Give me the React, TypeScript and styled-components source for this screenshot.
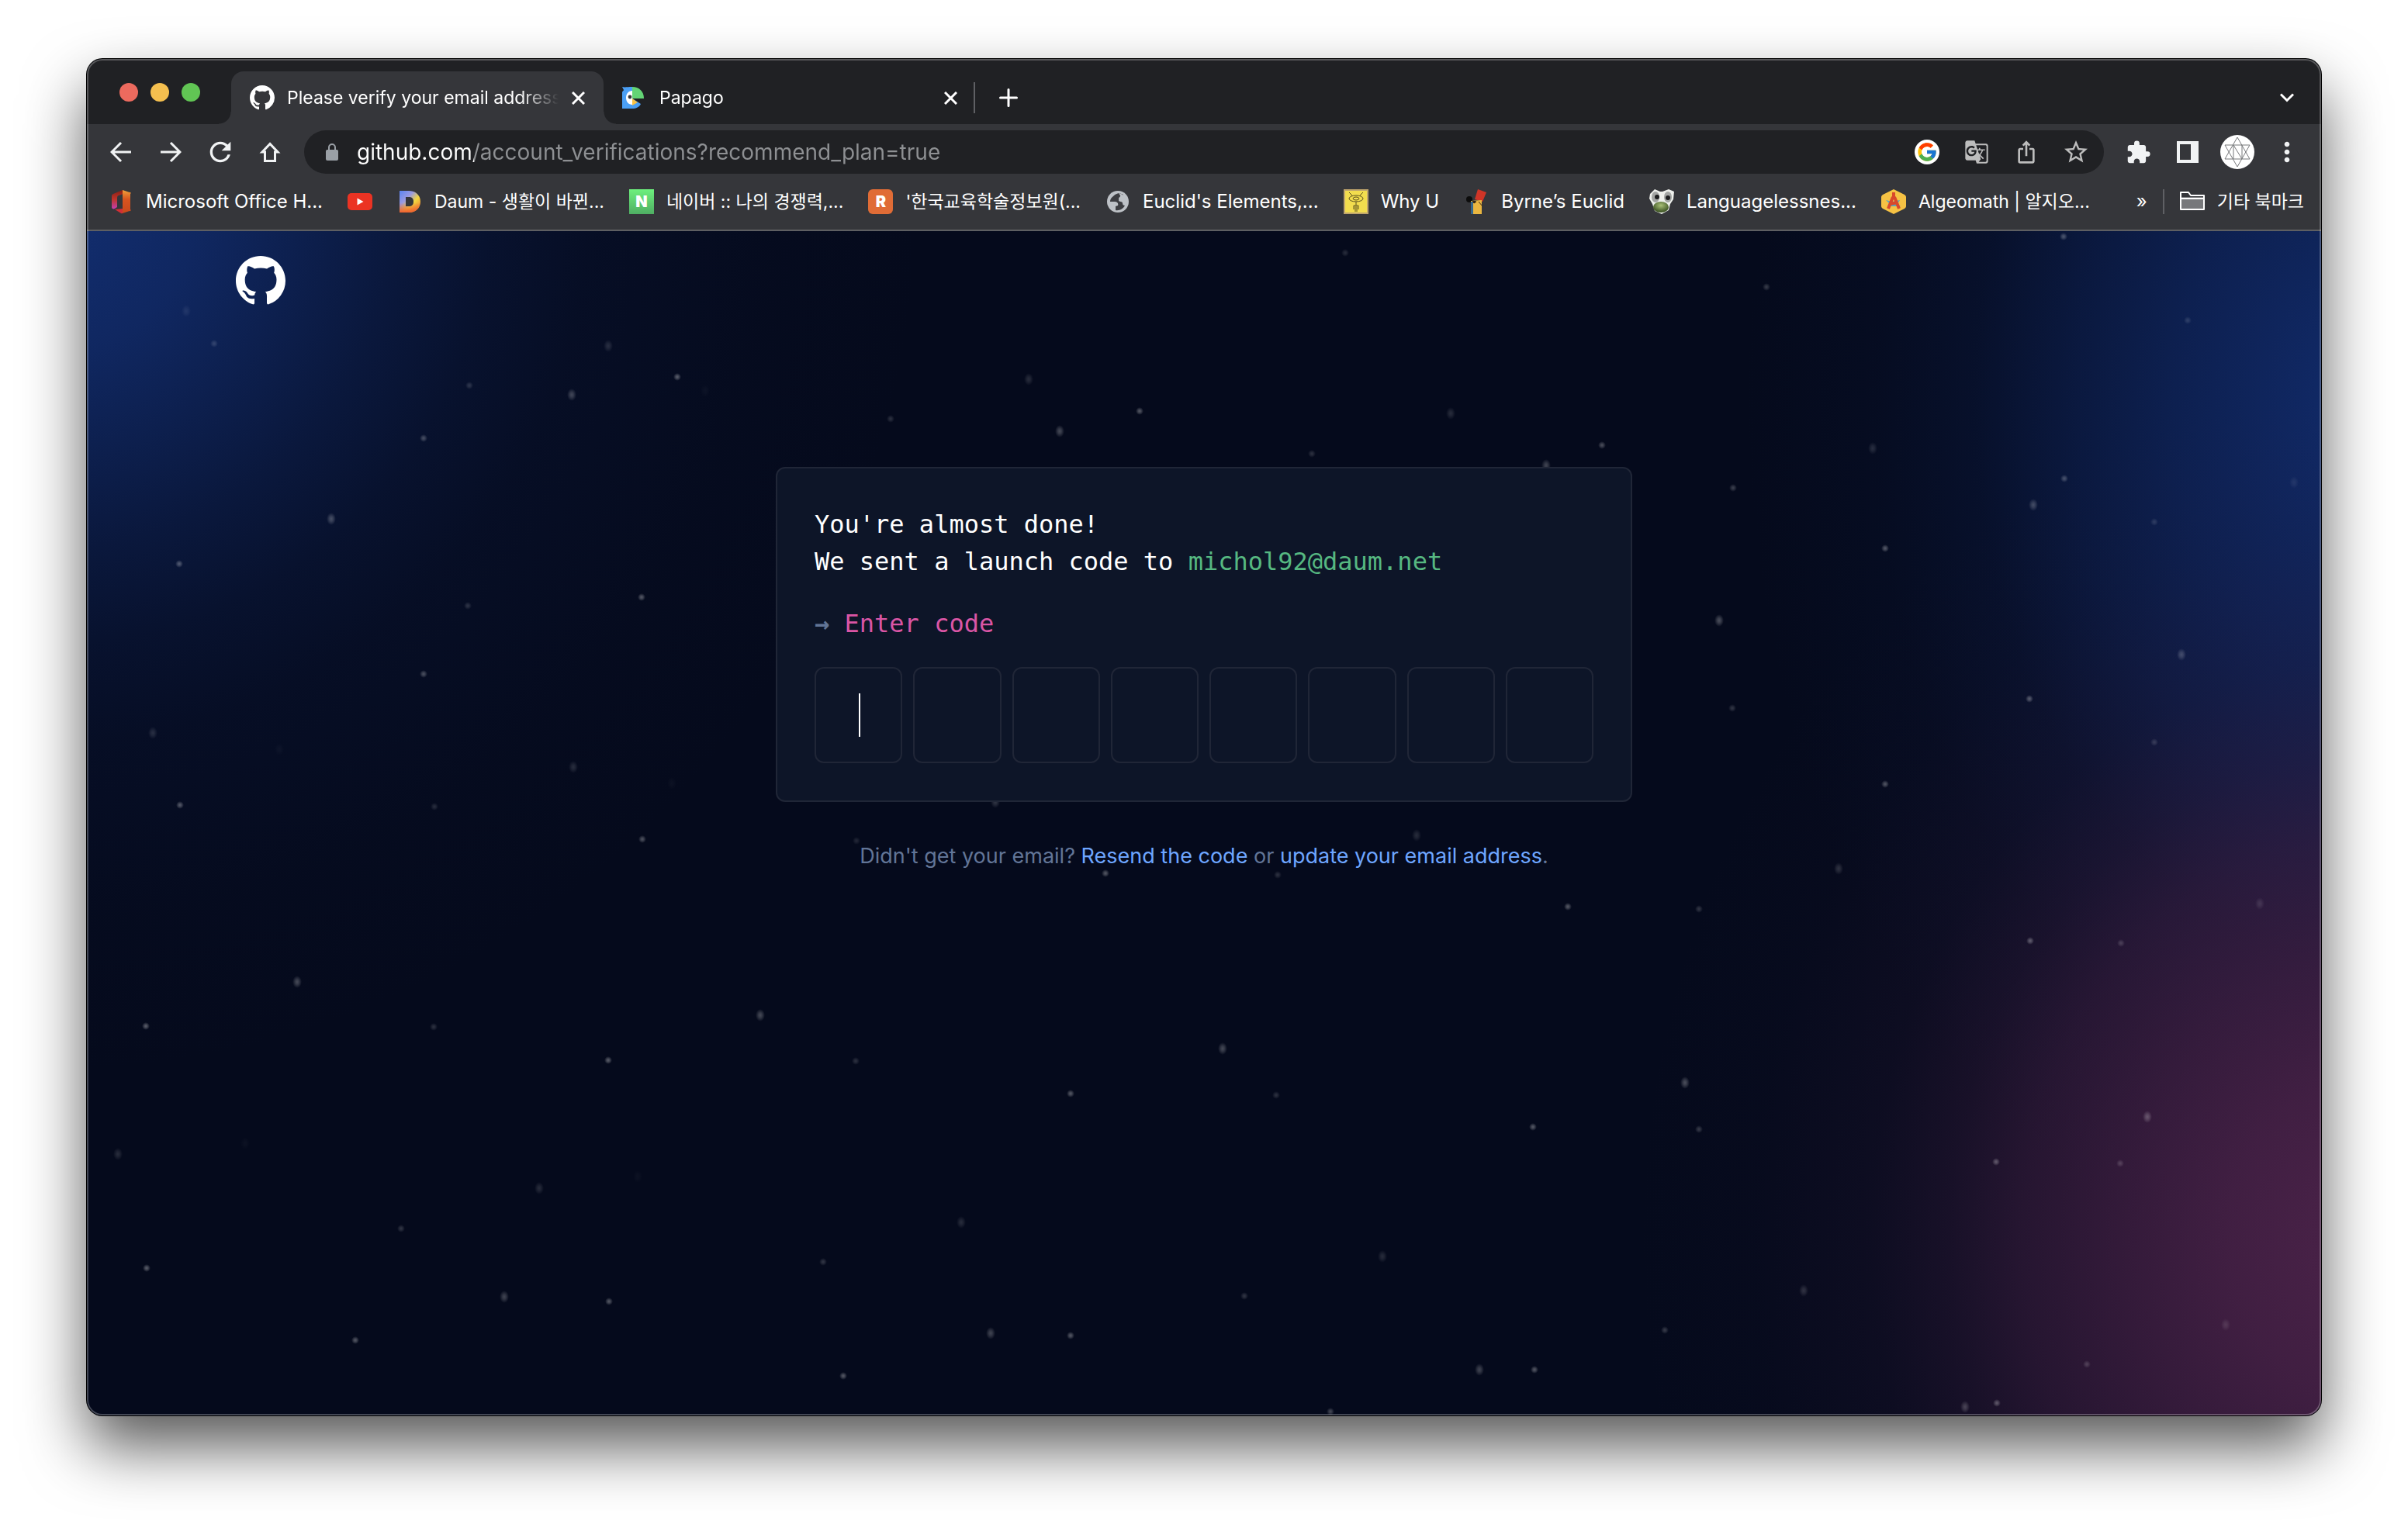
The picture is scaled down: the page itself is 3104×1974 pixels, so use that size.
import React from "react";
import styled, { createGlobalStyle } from "styled-components";
import {
  MdRefresh,
  MdGTranslate,
  MdIosShare,
  MdStarBorder,
  MdExtension,
  MdMoreVert,
} from "react-icons/md";
import { FcGoogle } from "react-icons/fc";

const ui = `Inter, "Noto Sans CJK KR", sans-serif`;
const mono = `"DejaVu Sans Mono", "Liberation Mono", monospace`;

const GlobalStyle = createGlobalStyle`
  *, *::before, *::after { box-sizing: border-box; }
  body { margin: 0; background: #fff; font-family: ${ui}; }
  button, input { font: inherit; color: inherit; }
  button { border: 0; padding: 0; background: none; }
  svg { display: block; }
`;

const Desktop = styled.div`
  min-height: 100vh;
  padding: 76px 112px 149px;
  display: flex;
  overflow: hidden;
`;

const BrowserWindow = styled.div`
  position: relative;
  flex: 1;
  min-width: 0;
  display: flex;
  flex-direction: column;
  overflow: hidden;
  border-radius: 20px;
  background: #050a1c;
  box-shadow: 0 0 0 1px #000, 0 40px 80px rgba(0, 0, 0, 0.66);

  &::after {
    content: "";
    position: absolute;
    inset: 0;
    border: 2px solid rgba(255, 255, 255, 0.25);
    border-radius: 20px;
    pointer-events: none;
    z-index: 3;
  }
`;

/* Tab strip */

const TabStrip = styled.div`
  height: 84px;
  display: flex;
  align-items: flex-end;
  padding: 0 12px 0 42px;
  background: #202124;
`;

const Lights = styled.div`
  display: flex;
  align-items: center;
  align-self: stretch;
  gap: 16px;
  margin-right: 40px;
  padding-top: 2px;
`;

const Light = styled.button<{ $color: string }>`
  width: 24px;
  height: 24px;
  border-radius: 50%;
  background: ${(p) => p.$color};
`;

const Tabs = styled.div`
  display: flex;
`;

const Tab = styled.div<{ $active?: boolean }>`
  position: relative;
  width: 480px;
  height: 68px;
  display: flex;
  align-items: center;
  padding: 0 17px 0 24px;
  border-radius: 16px 16px 0 0;
  background: ${(p) => (p.$active ? "#35363a" : "transparent")};

  &::before,
  &::after {
    content: "";
    display: ${(p) => (p.$active ? "block" : "none")};
    position: absolute;
    bottom: 0;
    width: 16px;
    height: 16px;
  }
  &::before {
    right: 100%;
    background: radial-gradient(circle at 0 0, transparent 15px, #35363a 16px);
  }
  &::after {
    left: 100%;
    background: radial-gradient(circle at 100% 0, transparent 15px, #35363a 16px);
  }
`;

const TabTitle = styled.button`
  flex: 1;
  min-width: 0;
  height: 100%;
  display: flex;
  align-items: center;
  gap: 16px;
  color: #fff;
  font-size: 23px;
  line-height: 32px;
  text-align: left;
`;

const TabText = styled.span`
  flex: 1;
  min-width: 0;
  overflow: hidden;
  white-space: nowrap;
  mask-image: linear-gradient(to right, #000 300px, transparent 350px);
`;

const CloseButton = styled.button`
  width: 32px;
  height: 32px;
  display: grid;
  place-items: center;
  color: #fff;
`;

const TabDivider = styled.span`
  width: 2px;
  height: 40px;
  margin: 0 11px 14px -3px;
  background: #5f6064;
`;

const IconButton = styled.button<{ $tone?: string }>`
  flex: none;
  width: 64px;
  height: 56px;
  display: grid;
  place-items: center;
  color: ${(p) => p.$tone ?? "#f1f3f4"};
`;

const StripButton = styled(IconButton)`
  height: 68px;
`;

const Spacer = styled.div`
  flex: 1;
`;

/* Toolbar */

const Toolbar = styled.div`
  height: 72px;
  display: flex;
  align-items: center;
  padding: 0 12px;
  background: #35363a;
`;

const Omnibox = styled.form`
  flex: 1;
  min-width: 0;
  height: 56px;
  display: flex;
  align-items: center;
  margin: 0 12px;
  padding: 0 4px;
  border-radius: 28px;
  background: #202124;
`;

const AddressInput = styled.input`
  flex: 1;
  min-width: 0;
  height: 56px;
  padding: 0;
  border: 0;
  outline: 0;
  font-size: 28px;
  color: #8e9093;
  background: linear-gradient(to right, #fff 151px, #8e9093 151px);
  background-clip: text;
  -webkit-text-fill-color: transparent;
`;

const GoogleBadge = styled.span`
  width: 32px;
  height: 32px;
  display: grid;
  place-items: center;
  border-radius: 50%;
  background: #fff;
`;

const Bookmarks = styled.nav`
  height: 66px;
  display: flex;
  align-items: center;
  gap: 32px;
  padding: 0 22px 8px 28px;
  border-bottom: 2px solid #5e5f62;
  background: #35363a;
`;

const Bookmark = styled.a`
  flex: none;
  display: flex;
  align-items: center;
  gap: 16px;
  color: #fff;
  font-size: 24px;
  line-height: 32px;
  white-space: nowrap;
  text-decoration: none;

  &:lang(ko) {
    font-size: 23px;
  }
`;

const BookmarksEnd = styled.div`
  display: flex;
  align-items: center;
  gap: 20px;
  margin-left: auto;
`;

const MoreBookmarks = styled.button`
  color: #fff;
  font-size: 24px;
  line-height: 32px;
`;

const Rule = styled.span`
  width: 2px;
  height: 32px;
  background: #5f6064;
`;

const LetterIcon = styled.span<{ $background: string; $radius: number }>`
  width: 32px;
  height: 32px;
  display: grid;
  place-items: center;
  border-radius: ${(p) => p.$radius}px;
  background: ${(p) => p.$background};
  color: #fff;
  font-size: 20px;
  font-weight: 900;
  line-height: 32px;
`;

/* Page */

const Page = styled.main`
  position: relative;
  isolation: isolate;
  flex: 1;
  display: flex;
  flex-direction: column;
  background:
    radial-gradient(
      ellipse 940px 1090px at 102% 85%,
      rgba(74, 34, 72, 0.95) 8%,
      rgba(74, 34, 72, 0.86) 19%,
      rgba(74, 34, 72, 0.68) 33%,
      rgba(74, 34, 72, 0.48) 47%,
      rgba(74, 34, 72, 0.28) 57%,
      rgba(74, 34, 72, 0.12) 68%,
      rgba(74, 34, 72, 0.03) 84%,
      transparent 100%
    ),
    radial-gradient(
      ellipse 800px 1150px at 102% 14%,
      rgba(17, 42, 104, 0.95) 7%,
      rgba(17, 42, 104, 0.68) 31%,
      rgba(17, 42, 104, 0.46) 47%,
      rgba(17, 42, 104, 0.2) 63%,
      rgba(17, 42, 104, 0.07) 79%,
      transparent 100%
    ),
    radial-gradient(
      ellipse 1140px 1140px at -2% -3%,
      rgba(18, 45, 110, 1) 4%,
      rgba(18, 45, 110, 0.84) 18%,
      rgba(18, 45, 110, 0.6) 30%,
      rgba(18, 45, 110, 0.4) 40%,
      rgba(18, 45, 110, 0.22) 51%,
      rgba(18, 45, 110, 0.11) 62%,
      rgba(18, 45, 110, 0.03) 82%,
      transparent 100%
    ),
    #050a1c;
`;

const Sky = styled.svg`
  position: absolute;
  inset: 0;
  width: 100%;
  height: 100%;
  z-index: -1;
`;

const PageHeader = styled.header`
  display: flex;
  padding: 32px 192px;
`;

const LogoLink = styled.a`
  color: #fff;
`;

const Content = styled.section`
  display: flex;
  flex-direction: column;
  align-items: center;
  padding: 176px 32px 64px;
`;

const Card = styled.form`
  width: 100%;
  max-width: 1104px;
  padding: 48px;
  border: 2px solid #202637;
  border-radius: 12px;
  background: #0d1528;
  font-family: ${mono};
  font-size: 32px;
  line-height: 48px;
  color: #fff;
`;

const Message = styled.p`
  margin: 0 0 32px;
`;

const Email = styled.span`
  color: #56b881;
`;

const Prompt = styled.label`
  display: block;
  margin-bottom: 32px;
  color: #da55a5;
`;

const Arrow = styled.span`
  color: #627597;
  font-weight: 700;
`;

const CodeRow = styled.div`
  display: grid;
  grid-template-columns: repeat(8, 1fr);
  gap: 14px;
`;

const CodeCell = styled.div`
  position: relative;
  display: grid;
`;

const CodeInput = styled.input`
  width: 100%;
  height: 124px;
  padding: 0;
  border: 2px solid #202637;
  border-radius: 12px;
  outline: 0;
  background: transparent;
  color: #fff;
  font-size: 48px;
  text-align: center;
`;

const Caret = styled.span`
  position: absolute;
  top: 34px;
  left: 57px;
  width: 2px;
  height: 56px;
  background: #fff;
`;

const Help = styled.p`
  margin: 48px 0 0;
  color: #627597;
  font-size: 27px;
  line-height: 44px;
`;

const HelpLink = styled.a`
  color: #6ea6ff;
  text-decoration: none;
`;

function GitHubMark({ size }: { size: number }) {
  return (
    <svg width={size} height={size} viewBox="0 0 16 16" fill="#fff" aria-hidden="true">
      <path d="M8 0C3.58 0 0 3.58 0 8c0 3.54 2.29 6.53 5.47 7.59.4.07.55-.17.55-.38 0-.19-.01-.82-.01-1.49-2.01.37-2.53-.49-2.69-.94-.09-.23-.48-.94-.82-1.13-.28-.15-.68-.52-.01-.53.63-.01 1.08.58 1.23.82.72 1.21 1.87.87 2.33.66.07-.52.28-.87.51-1.07-1.78-.2-3.64-.89-3.64-3.95 0-.87.31-1.59.82-2.15-.08-.2-.36-1.02.08-2.12 0 0 .67-.21 2.2.82.64-.18 1.32-.27 2-.27.68 0 1.36.09 2 .27 1.53-1.04 2.2-.82 2.2-.82.44 1.1.16 1.92.08 2.12.51.56.82 1.27.82 2.15 0 3.07-1.87 3.75-3.65 3.95.29.25.54.73.54 1.48 0 1.07-.01 1.93-.01 2.2 0 .21.15.46.55.38A8.013 8.013 0 0016 8c0-4.42-3.58-8-8-8z" />
    </svg>
  );
}

function ArrowIcon({ forward }: { forward?: boolean }) {
  return (
    <svg width="28" height="28" viewBox="0 0 28 28" fill="none" stroke="#f1f3f4" strokeWidth="3" aria-hidden="true">
      <path d={forward ? "M1 14h24M14 2l12 12-12 12" : "M27 14H3M14 2L2 14l12 12"} />
    </svg>
  );
}

function HomeIcon() {
  return (
    <svg width="28" height="28" viewBox="0 0 28 28" fill="none" stroke="#f1f3f4" strokeWidth="3" aria-hidden="true">
      <path d="M14 3.500L4 14h3.500v11.500h13V14H24z" />
    </svg>
  );
}

function LockIcon() {
  return (
    <svg width="18" height="22" viewBox="0 0 18 22" aria-hidden="true">
      <path d="M5 9V5a4 4 0 0 1 8 0v4" fill="none" stroke="#9aa0a6" strokeWidth="2" />
      <rect x="1" y="8" width="16" height="14" rx="2" fill="#9aa0a6" />
    </svg>
  );
}

function Cross() {
  return (
    <svg width="17" height="17" viewBox="0 0 17 17" stroke="#fff" strokeWidth="3" aria-hidden="true">
      <path d="M1 1l15 15M16 1L1 16" />
    </svg>
  );
}

function PapagoIcon() {
  return (
    <svg width="32" height="32" viewBox="0 0 32 32" aria-hidden="true">
      <path d="M0 2c3 1 7 0 13 0v28H0V10c0-3 2-3 2-4z" fill="#4a9ff5" />
      <path d="M13 2c9 0 15 6 15 15H13z" fill="#63d475" />
      <path d="M13 17v13c5 0 9-2 11-6z" fill="#4a9ff5" />
      <path d="M13 7C8 7 5 11 5 16s3 9 8 9z" fill="#fff" />
      <path d="M13 17l7 5-7 4z" fill="#f9c243" />
      <circle cx="10" cy="15" r="2.400" fill="#35363a" />
    </svg>
  );
}

function OfficeIcon() {
  return (
    <svg width="32" height="32" viewBox="0 0 32 32" aria-hidden="true">
      <defs>
        <linearGradient id="office-side" x1="0" y1="1" x2="0" y2="0">
          <stop offset="0" stopColor="#c53fb0" />
          <stop offset=".5" stopColor="#c0352c" />
          <stop offset="1" stopColor="#8a1f14" />
        </linearGradient>
        <linearGradient id="office-front" x1="0" y1="0" x2="0" y2="1">
          <stop offset="0" stopColor="#f0a13a" />
          <stop offset=".4" stopColor="#d8541f" />
          <stop offset="1" stopColor="#c8481c" />
        </linearGradient>
      </defs>
      <path d="M18 1L6 6a3 3 0 0 0-2 3v14c0 2 2 3 4 2l3-2V11c0-2 1-3 2-3l6-2z" fill="url(#office-side)" />
      <path d="M18 1l9 3a1 1 0 0 1 1 2v20a1 1 0 0 1-1 2l-9 3z" fill="url(#office-front)" />
      <path d="M8 26l10-1v6a2 2 0 0 1-2 0z" fill="#d02f36" />
    </svg>
  );
}

function YouTubeIcon() {
  return (
    <svg width="32" height="32" viewBox="0 0 32 32" aria-hidden="true">
      <rect y="5" width="32" height="22" rx="5" fill="#eb3323" />
      <path d="M12.500 11.500v9l8-4.500z" fill="#fff" />
    </svg>
  );
}

function DaumIcon() {
  return (
    <svg width="32" height="32" viewBox="0 0 32 32" aria-hidden="true">
      <defs>
        <linearGradient id="daum" x1="0" y1="0" x2="1" y2="1">
          <stop offset="0" stopColor="#5a84f2" />
          <stop offset=".35" stopColor="#9a9ae0" />
          <stop offset=".6" stopColor="#f3d63f" />
          <stop offset="1" stopColor="#ef6a2d" />
        </linearGradient>
        <linearGradient id="daum-warm" x1="0" y1="1" x2="0" y2="0">
          <stop offset="0" stopColor="#f0602f" />
          <stop offset=".45" stopColor="#f0602f" stopOpacity="0" />
        </linearGradient>
      </defs>
      <g fillRule="evenodd">
        <path d="M3 2h12c9 0 15 6 15 14s-6 14-15 14H3zM11 10v12h4c4 0 6-2 6-6s-2-6-6-6z" fill="url(#daum)" />
        <path d="M3 2h12c9 0 15 6 15 14s-6 14-15 14H3zM11 10v12h4c4 0 6-2 6-6s-2-6-6-6z" fill="url(#daum-warm)" />
      </g>
    </svg>
  );
}

function GlobeIcon() {
  return (
    <svg width="32" height="32" viewBox="0 0 32 32" aria-hidden="true">
      <circle cx="16" cy="16" r="14" fill="#bdc1c6" />
      <path d="M18 5c-2 0-5 1-8 4-3 2-4 5-4 7h6c3 0 5 2 4 5l-3 1v5c5 1 10-2 12-6-2 0-3-1-3-3 0-3-5-1-5-4 0-2 2-2 3-3 2-1 0-3 3-4z" fill="#3c3d41" />
      <path d="M17 5c3 0 7 3 8 7 1 2 1 3 1 5-2 0-4 0-5-2s-4-1-4-3 3-2 2-4z" fill="#bdc1c6" />
    </svg>
  );
}

function WhyUIcon() {
  return (
    <svg width="32" height="32" viewBox="0 0 32 32" fill="none" stroke="#5b501d" aria-hidden="true">
      <rect x="1" y="1" width="30" height="30" fill="#f2dd4e" stroke="#bfa56c" strokeWidth="2" />
      <ellipse cx="16" cy="12" rx="9" ry="4" />
      <ellipse cx="16" cy="12" rx="4" ry="2" />
      <path d="M11 8L7 4M21 8l4-4M16 16v5M13 26v-5h6v5M15 29v-7M17 29v-7" />
    </svg>
  );
}

function ByrneIcon() {
  return (
    <svg width="32" height="32" viewBox="0 0 32 32" aria-hidden="true">
      <path d="M18 0l11 4-5 12-10-3z" fill="#cf3527" />
      <circle cx="7" cy="13" r="4" fill="#0c0c0c" />
      <path d="M9 15l14-1v18H9z" fill="#e9b640" />
      <path d="M9 16h3v16H9z" fill="#35678c" />
      <path d="M11 15l5 1-3 2zM19 16l5 6" stroke="#3b2c19" fill="#0c0c0c" />
    </svg>
  );
}

function FrogIcon() {
  return (
    <svg width="32" height="32" viewBox="0 0 32 32" aria-hidden="true">
      <defs>
        <radialGradient id="frog" cx=".5" cy=".35" r=".6">
          <stop offset="0" stopColor="#a9c078" />
          <stop offset="1" stopColor="#3d5424" />
        </radialGradient>
      </defs>
      <path d="M1 6l6-6 7 3h3l8-3 7 3-1 10-4 6-2 8-9 5-9-4-3-9-4-7z" fill="#eef0ec" />
      <ellipse cx="15" cy="23" rx="10" ry="7" fill="url(#frog)" />
      <ellipse cx="8" cy="10" rx="5" ry="7" fill="#a3a5a3" />
      <ellipse cx="24" cy="10" rx="5" ry="7" fill="#a3a5a3" />
      <circle cx="10" cy="10" r="3" fill="#1d1e1f" />
      <circle cx="24" cy="11" r="3" fill="#1d1e1f" />
    </svg>
  );
}

function AlgeomathIcon() {
  return (
    <svg width="32" height="32" viewBox="0 0 32 32" aria-hidden="true">
      <path d="M16 0l14 7a4 4 0 0 1 2 4v10a4 4 0 0 1-2 4l-14 7-14-7a4 4 0 0 1-2-4V11a4 4 0 0 1 2-4z" fill="#f6c244" />
      <path d="M6 14l8 2 10-2-3 5 4 3H8l2-4z" fill="#58a6c0" />
      <path d="M16 4v7M15 10L9 25M17 10l6 15M11 19l10-2" fill="none" stroke="#d9482b" strokeWidth="4" />
    </svg>
  );
}

function FolderIcon() {
  return (
    <svg width="32" height="32" viewBox="0 0 32 32" aria-hidden="true">
      <path d="M2 10h28v16H2z" fill="#77787b" />
      <path d="M1 4h10l3 4h17v18H1zM1 12h30" fill="none" stroke="#fff" strokeWidth="2" strokeLinejoin="round" />
    </svg>
  );
}

function SidePanelIcon() {
  return (
    <svg width="28" height="28" viewBox="0 0 28 28" aria-hidden="true">
      <path d="M0 0h28v28H0zM4 4v20h14V4z" fill="#f1f3f4" fillRule="evenodd" />
    </svg>
  );
}

function Avatar() {
  return (
    <svg width="44" height="44" viewBox="0 0 44 44" fill="none" stroke="#77787b" aria-hidden="true">
      <circle cx="22" cy="22" r="22" fill="#fff" stroke="none" />
      <path d="M22 3l16 28H6zM22 41L6 13h32zM17 31V13l11 18V13" />
    </svg>
  );
}

function Chevron() {
  return (
    <svg width="20" height="12" viewBox="0 0 20 12" fill="none" stroke="#fff" strokeWidth="3" aria-hidden="true">
      <path d="M2 1.500l8 8 8-8" />
    </svg>
  );
}

function Plus() {
  return (
    <svg width="24" height="24" viewBox="0 0 24 24" stroke="#fff" strokeWidth="3" strokeLinecap="round" aria-hidden="true">
      <path d="M12 1.500v21M1.500 12h21" />
    </svg>
  );
}

/* x, y, radius, brightness */
const stars: [number, number, number, number][] = [
  [128, 103, 8, 0.08], [164, 145, 5, 0.16], [493, 199, 5, 0.16], [672, 148, 8, 0.14],
  [761, 188, 5, 0.34], [625, 211, 8, 0.24], [434, 267, 5, 0.26], [315, 371, 8, 0.26],
  [119, 429, 5, 0.3], [491, 483, 5, 0.16], [715, 472, 5, 0.32], [434, 571, 5, 0.28],
  [85, 647, 8, 0.14], [627, 691, 8, 0.14], [120, 740, 5, 0.32], [448, 742, 5, 0.14],
  [716, 784, 5, 0.3], [248, 668, 8, 0.03], [754, 712, 8, 0.03], [797, 206, 8, 0.03],
  [271, 968, 8, 0.26], [76, 1025, 5, 0.34], [447, 1026, 5, 0.16], [868, 1011, 8, 0.26],
  [672, 1069, 5, 0.34], [40, 1190, 8, 0.14], [204, 1176, 8, 0.03], [583, 1234, 8, 0.14],
  [710, 1219, 8, 0.03], [405, 1286, 5, 0.18], [77, 1337, 5, 0.34], [538, 1374, 8, 0.24],
  [673, 1380, 5, 0.32], [346, 1430, 5, 0.32], [2548, 7, 5, 0.28], [2165, 72, 5, 0.2],
  [2708, 115, 5, 0.14], [2302, 280, 8, 0.14], [2122, 331, 5, 0.22], [2549, 319, 5, 0.26],
  [2509, 353, 8, 0.24], [2845, 324, 8, 0.08], [2665, 375, 5, 0.14], [2318, 409, 5, 0.32],
  [2104, 502, 8, 0.28], [2700, 546, 8, 0.22], [2504, 603, 5, 0.32], [2121, 615, 5, 0.18],
  [2665, 659, 5, 0.16], [2318, 713, 5, 0.3], [2258, 822, 8, 0.16], [2078, 874, 5, 0.18],
  [2801, 867, 8, 0.12], [2505, 915, 5, 0.32], [2622, 918, 5, 0.18], [2060, 1098, 8, 0.28],
  [2078, 1158, 5, 0.2], [2656, 1142, 8, 0.26], [2461, 1200, 5, 0.3], [2621, 1202, 5, 0.18],
  [2213, 1366, 8, 0.16], [2034, 1417, 5, 0.2], [2757, 1410, 8, 0.12], [2578, 1461, 5, 0.18],
  [2421, 1516, 8, 0.22], [2462, 1511, 5, 0.3], [1214, 191, 8, 0.14], [1254, 258, 8, 0.26],
  [1357, 232, 5, 0.32], [1036, 242, 5, 0.16], [1758, 235, 8, 0.14], [1579, 287, 5, 0.16],
  [1881, 302, 8, 0.24], [1953, 276, 5, 0.28], [1622, 28, 5, 0.14], [1171, 736, 8, 0.18],
  [1714, 779, 8, 0.14], [1313, 828, 5, 0.32], [1535, 830, 5, 0.16], [1909, 871, 5, 0.32],
  [992, 786, 5, 0.12], [1464, 1054, 8, 0.26], [1268, 1112, 5, 0.32], [991, 1070, 5, 0.16],
  [1533, 1114, 5, 0.16], [1864, 1155, 5, 0.32], [1127, 1278, 8, 0.14], [1670, 1322, 8, 0.14],
  [949, 1329, 5, 0.18], [1492, 1373, 5, 0.18], [1165, 1421, 8, 0.24], [1268, 1424, 5, 0.32],
  [975, 1476, 5, 0.32], [1795, 1468, 8, 0.24], [1866, 1468, 5, 0.32], [1603, 1522, 5, 0.26],
];

function StarField() {
  return (
    <Sky viewBox="0 0 2880 1527" preserveAspectRatio="xMidYMid slice" aria-hidden="true">
      <defs>
        <radialGradient id="star">
          <stop offset="0" stopColor="#fff" />
          <stop offset=".4" stopColor="#fff" stopOpacity=".7" />
          <stop offset="1" stopColor="#fff" stopOpacity="0" />
        </radialGradient>
      </defs>
      {stars.map(([x, y, r, o]) => (
        <ellipse key={`${x}-${y}`} cx={x} cy={y} rx={r > 5 ? 6 : 5} ry={r} fill="url(#star)" opacity={o} />
      ))}
    </Sky>
  );
}

const bookmarks = [
  { icon: <OfficeIcon />, label: "Microsoft Office H...", lang: "en" },
  { icon: <YouTubeIcon />, label: "", lang: "en" },
  { icon: <DaumIcon />, label: "Daum - 생활이 바뀐...", lang: "ko" },
  { icon: <LetterIcon $background="linear-gradient(#6df07d, #4fae63)" $radius={0}>N</LetterIcon>, label: "네이버 :: 나의 경쟁력,...", lang: "ko" },
  { icon: <LetterIcon $background="#e06c36" $radius={6}>R</LetterIcon>, label: "'한국교육학술정보원(...", lang: "ko" },
  { icon: <GlobeIcon />, label: "Euclid's Elements,...", lang: "en" },
  { icon: <WhyUIcon />, label: "Why U", lang: "en" },
  { icon: <ByrneIcon />, label: "Byrne’s Euclid", lang: "en" },
  { icon: <FrogIcon />, label: "Languagelessnes...", lang: "en" },
  { icon: <AlgeomathIcon />, label: "Algeomath | 알지오...", lang: "ko" },
];

export default function App() {
  return (
    <Desktop>
      <GlobalStyle />
      <BrowserWindow>
        <TabStrip>
          <Lights>
            <Light $color="#ec6a5e" aria-label="Close window" />
            <Light $color="#f4bf4f" aria-label="Minimize window" />
            <Light $color="#61c554" aria-label="Zoom window" />
          </Lights>
          <Tabs>
            <Tab $active>
              <TabTitle>
                <GitHubMark size={32} />
                <TabText>Please verify your email address</TabText>
              </TabTitle>
              <CloseButton aria-label="Close tab"><Cross /></CloseButton>
            </Tab>
            <Tab>
              <TabTitle>
                <PapagoIcon />
                <TabText>Papago</TabText>
              </TabTitle>
              <CloseButton aria-label="Close tab"><Cross /></CloseButton>
            </Tab>
          </Tabs>
          <TabDivider />
          <StripButton aria-label="New tab"><Plus /></StripButton>
          <Spacer />
          <StripButton aria-label="Search tabs"><Chevron /></StripButton>
        </TabStrip>

        <Toolbar>
          <IconButton aria-label="Back"><ArrowIcon /></IconButton>
          <IconButton aria-label="Forward"><ArrowIcon forward /></IconButton>
          <IconButton aria-label="Reload"><MdRefresh size={40} /></IconButton>
          <IconButton aria-label="Home"><HomeIcon /></IconButton>
          <Omnibox>
            <IconButton type="button" aria-label="Site information"><LockIcon /></IconButton>
            <AddressInput aria-label="Address" defaultValue="github.com/account_verifications?recommend_plan=true" />
            <IconButton type="button" aria-label="Google"><GoogleBadge><FcGoogle size={28} /></GoogleBadge></IconButton>
            <IconButton type="button" $tone="#bdbdbd" aria-label="Translate"><MdGTranslate size={32} /></IconButton>
            <IconButton type="button" $tone="#bdbdbd" aria-label="Share"><MdIosShare size={32} /></IconButton>
            <IconButton type="button" $tone="#bdbdbd" aria-label="Bookmark this page"><MdStarBorder size={36} /></IconButton>
          </Omnibox>
          <IconButton aria-label="Extensions"><MdExtension size={33} /></IconButton>
          <IconButton aria-label="Side panel"><SidePanelIcon /></IconButton>
          <IconButton aria-label="Profile"><Avatar /></IconButton>
          <IconButton aria-label="Menu"><MdMoreVert size={40} /></IconButton>
        </Toolbar>

        <Bookmarks aria-label="Bookmarks">
          {bookmarks.map((b, i) => (
            <Bookmark key={i} href="#" lang={b.lang} aria-label={b.label || "YouTube"}>
              {b.icon}
              {b.label && <span>{b.label}</span>}
            </Bookmark>
          ))}
          <BookmarksEnd>
            <MoreBookmarks>»</MoreBookmarks>
            <Rule />
            <Bookmark href="#" lang="ko">
              <FolderIcon />
              <span>기타 북마크</span>
            </Bookmark>
          </BookmarksEnd>
        </Bookmarks>

        <Page>
          <StarField />
          <PageHeader>
            <LogoLink href="#" aria-label="GitHub"><GitHubMark size={64} /></LogoLink>
          </PageHeader>
          <Content>
            <Card>
              <Message>
                You're almost done!
                <br />
                We sent a launch code to <Email>michol92@daum.net</Email>
              </Message>
              <Prompt htmlFor="code-1">
                <Arrow>→</Arrow> Enter code
              </Prompt>
              <CodeRow>
                {Array.from({ length: 8 }, (_, i) => (
                  <CodeCell key={i}>
                    <CodeInput id={`code-${i + 1}`} maxLength={1} inputMode="numeric" aria-label={`Digit ${i + 1}`} />
                    {i === 0 && <Caret />}
                  </CodeCell>
                ))}
              </CodeRow>
            </Card>
            <Help>
              Didn't get your email? <HelpLink href="#">Resend the code</HelpLink> or{" "}
              <HelpLink href="#">update your email address</HelpLink>.
            </Help>
          </Content>
        </Page>
      </BrowserWindow>
    </Desktop>
  );
}
